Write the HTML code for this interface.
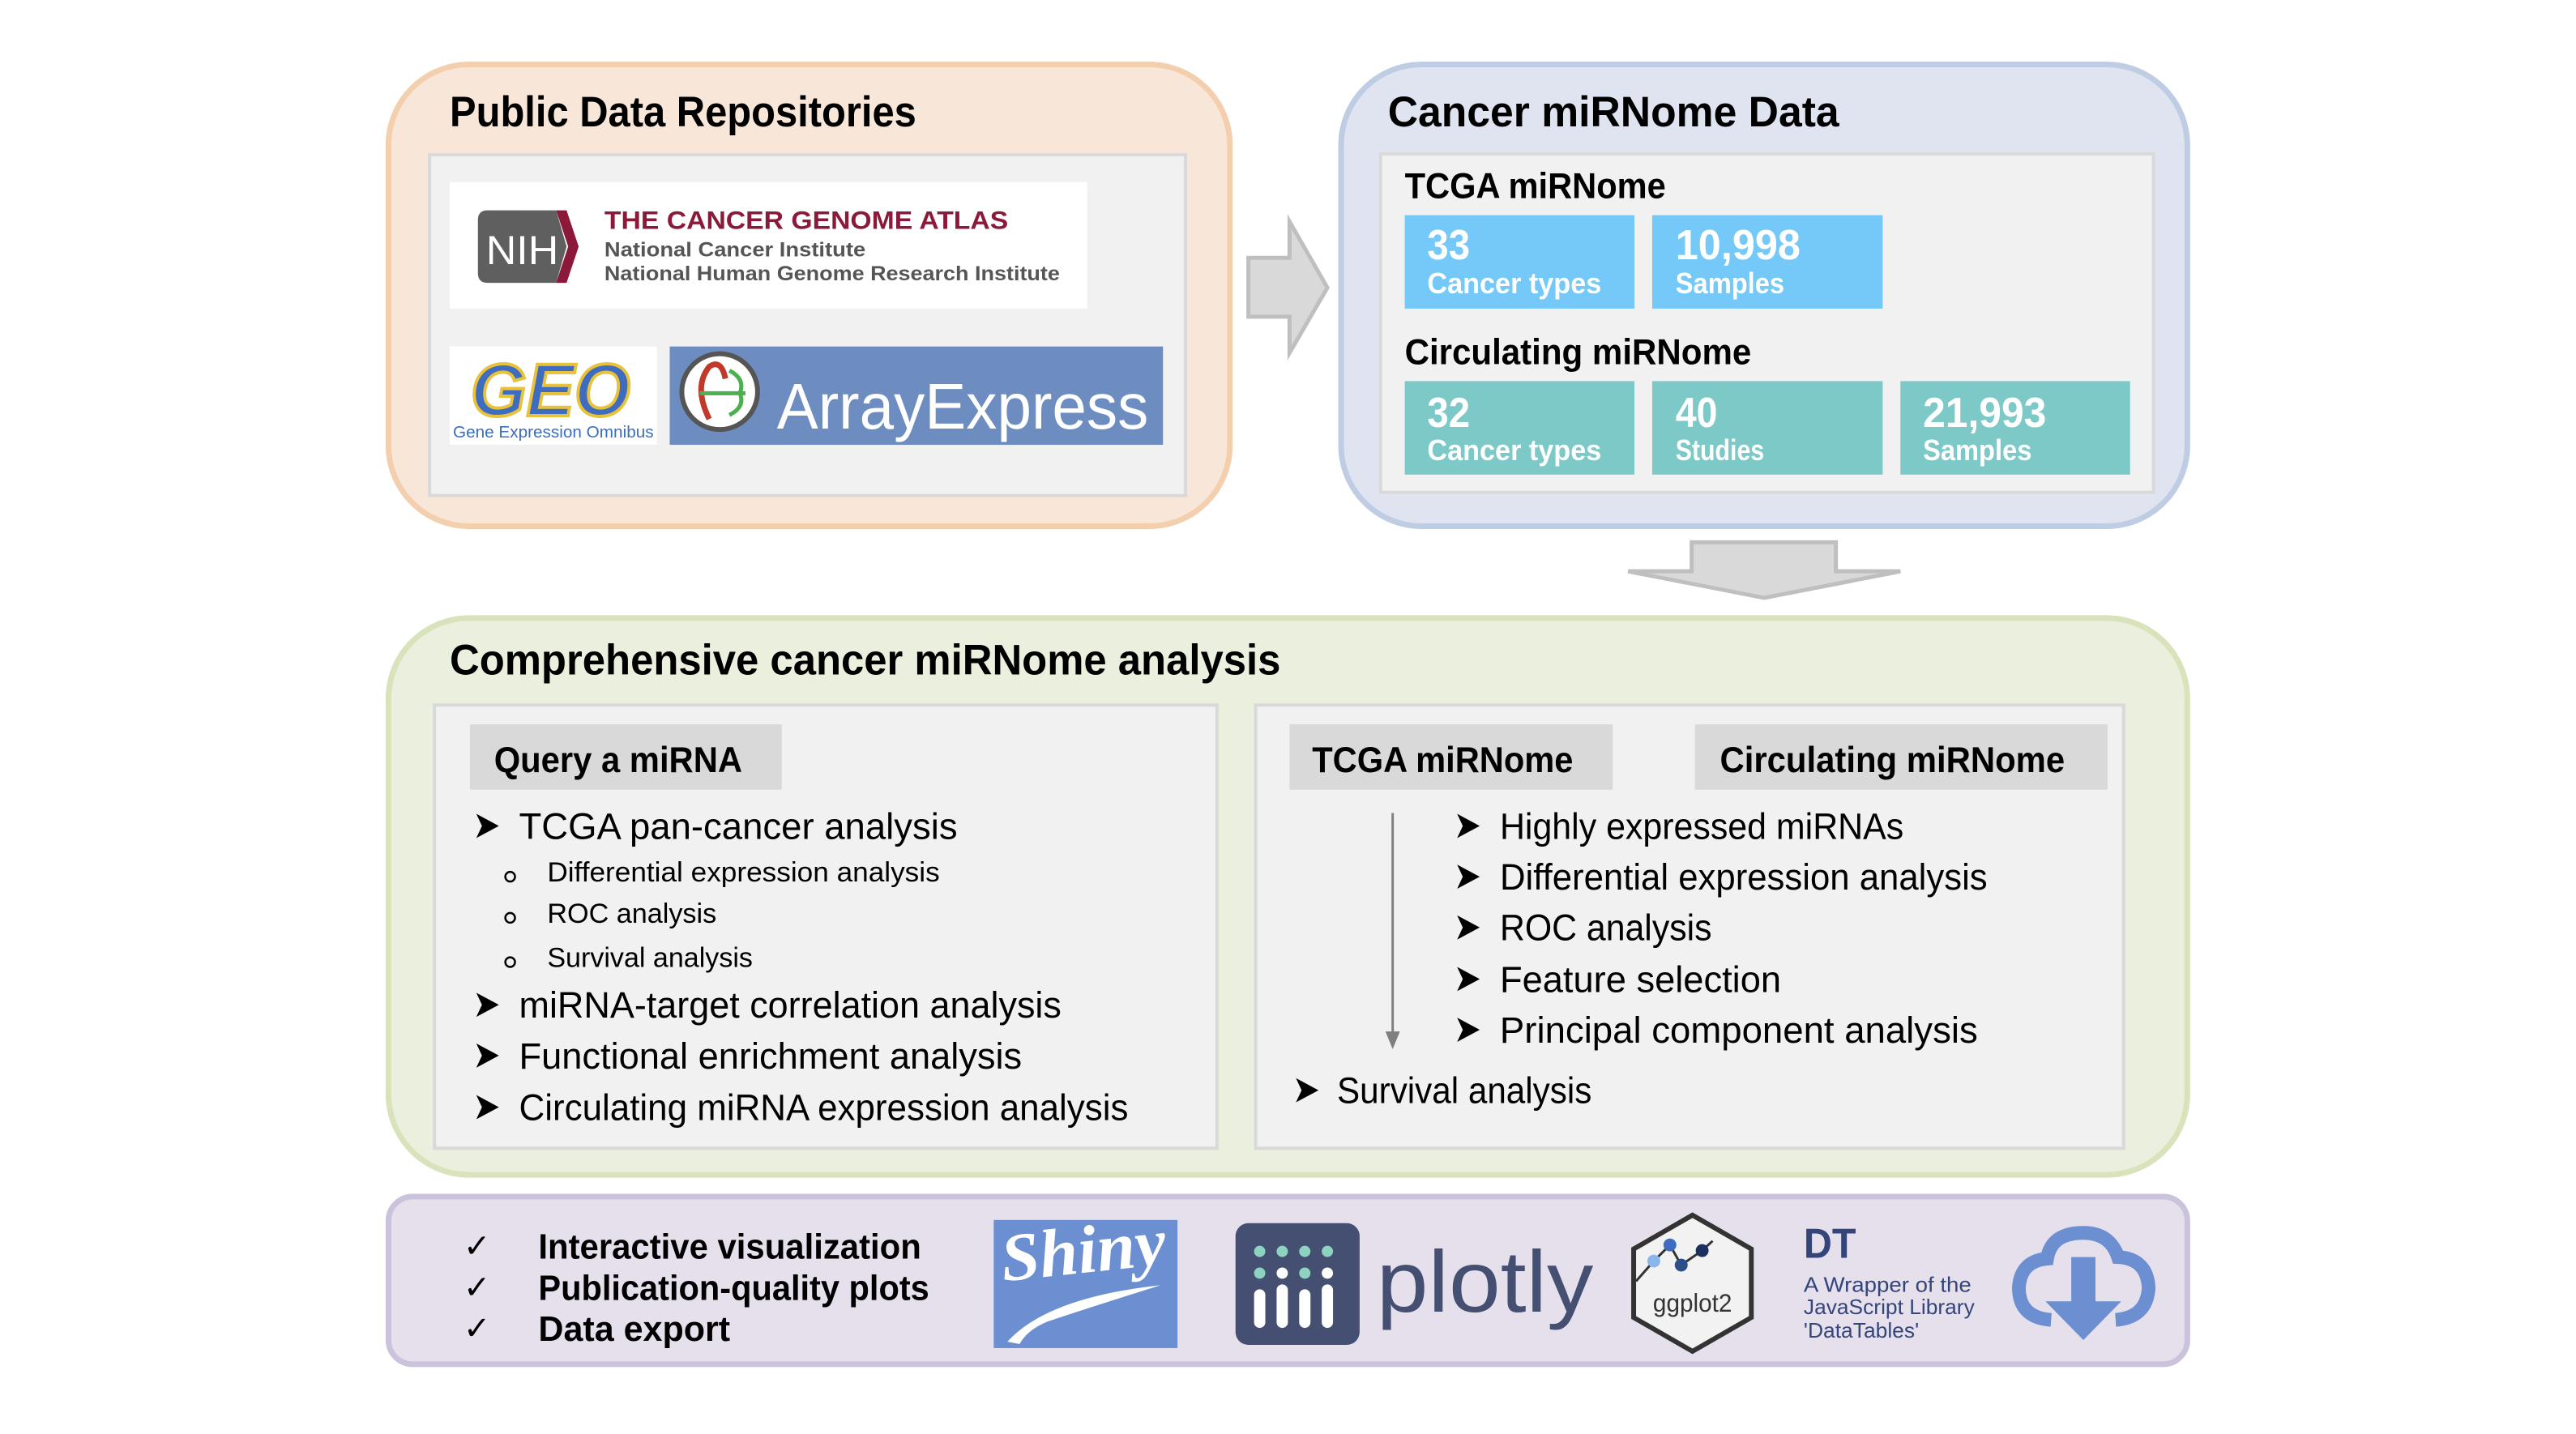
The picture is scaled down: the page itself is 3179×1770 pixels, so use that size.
<!DOCTYPE html>
<html><head><meta charset="utf-8"><style>
html,body{margin:0;padding:0;background:#fff;}
svg{display:block;}
text{font-family:"Liberation Sans",sans-serif;}
.b{font-weight:bold;}
</style></head><body>
<svg width="3179" height="1770" viewBox="0 0 3179 1770" xmlns="http://www.w3.org/2000/svg">
<defs>
<g id="arr"><path d="M0,-15 L28,0 L0,15 L7,0 Z" fill="#000"/></g>
</defs>
<g transform="scale(0.9946)">
<!-- Orange box -->
<rect x="482" y="80" width="1044" height="573" rx="100" fill="#f8e7d9" stroke="#f4cfae" stroke-width="7"/>
<text x="558" y="157" font-size="53" class="b" textLength="579" lengthAdjust="spacingAndGlyphs">Public Data Repositories</text>
<rect x="533" y="192" width="938" height="423" fill="#f1f1f1" stroke="#d9d9d9" stroke-width="4"/>
<rect x="558" y="226" width="791" height="157" fill="#fff"/>
<path d="M605,261 L690,261 L703,306 L690,351 L605,351 Q593,351 593,339 L593,273 Q593,261 605,261 Z" fill="#5f5f5f"/>
<path d="M690,261 L703,261 L718,306 L703,351 L690,351 L705,306 Z" fill="#8b1a3a"/>
<text x="603" y="328" font-size="50" fill="#fff" textLength="90" lengthAdjust="spacingAndGlyphs">NIH</text>
<text x="750" y="284" font-size="32" class="b" fill="#8b1a3a" textLength="501" lengthAdjust="spacingAndGlyphs">THE CANCER GENOME ATLAS</text>
<text x="750" y="318" font-size="25" class="b" fill="#555" textLength="324" lengthAdjust="spacingAndGlyphs">National Cancer Institute</text>
<text x="750" y="348" font-size="25" class="b" fill="#555" textLength="565" lengthAdjust="spacingAndGlyphs">National Human Genome Research Institute</text>
<rect x="558" y="430" width="257" height="122" fill="#fff"/>
<text x="584" y="516" font-size="92" class="b" font-style="italic" fill="#3d6cc0" stroke="#e8c23a" stroke-width="4" textLength="198" lengthAdjust="spacingAndGlyphs">GEO</text>
<text x="562" y="543" font-size="20" fill="#3a6fbf" textLength="249" lengthAdjust="spacingAndGlyphs">Gene Expression Omnibus</text>
<rect x="831" y="430" width="612" height="122" fill="#6d8cc0"/>
<circle cx="893" cy="486" r="47" fill="#fff" stroke="#555" stroke-width="6"/>
<path d="M880,520 Q860,480 880,455 Q895,445 900,470" fill="none" stroke="#c0392b" stroke-width="7"/>
<path d="M868,488 L925,488 M905,460 Q925,470 918,488 Q925,505 905,515" fill="none" stroke="#4caf50" stroke-width="5"/>
<text x="964" y="532" font-size="80" fill="#fff" textLength="461" lengthAdjust="spacingAndGlyphs">ArrayExpress</text>

<!-- right arrow -->
<path d="M1549,320 L1600,320 L1600,275 L1647,357 L1600,438 L1600,393 L1549,393 Z" fill="#d9d9d9" stroke="#bfbfbf" stroke-width="5"/>

<!-- Blue box -->
<rect x="1664" y="80" width="1050" height="573" rx="100" fill="#dfe4f0" stroke="#bfcde4" stroke-width="7"/>
<text x="1722" y="157" font-size="53" class="b" textLength="560" lengthAdjust="spacingAndGlyphs">Cancer miRNome Data</text>
<rect x="1713" y="191" width="959" height="420" fill="#f1f1f1" stroke="#d9d9d9" stroke-width="4"/>
<text x="1743" y="246" font-size="45" class="b" textLength="324" lengthAdjust="spacingAndGlyphs">TCGA miRNome</text>
<rect x="1743" y="267" width="285" height="116" fill="#75c9f8"/>
<rect x="2050" y="267" width="286" height="116" fill="#75c9f8"/>
<text x="1771" y="322" font-size="52" class="b" fill="#fff" textLength="53" lengthAdjust="spacingAndGlyphs">33</text>
<text x="1771" y="364" font-size="36" class="b" fill="#fff" textLength="216" lengthAdjust="spacingAndGlyphs">Cancer types</text>
<text x="2079" y="322" font-size="52" class="b" fill="#fff" textLength="155" lengthAdjust="spacingAndGlyphs">10,998</text>
<text x="2079" y="364" font-size="36" class="b" fill="#fff" textLength="135" lengthAdjust="spacingAndGlyphs">Samples</text>
<text x="1743" y="452" font-size="45" class="b" textLength="430" lengthAdjust="spacingAndGlyphs">Circulating miRNome</text>
<rect x="1743" y="473" width="285" height="116" fill="#7dc9c8"/>
<rect x="2050" y="473" width="286" height="116" fill="#7dc9c8"/>
<rect x="2358" y="473" width="285" height="116" fill="#7dc9c8"/>
<text x="1771" y="530" font-size="52" class="b" fill="#fff" textLength="53" lengthAdjust="spacingAndGlyphs">32</text>
<text x="1771" y="571" font-size="36" class="b" fill="#fff" textLength="216" lengthAdjust="spacingAndGlyphs">Cancer types</text>
<text x="2079" y="530" font-size="52" class="b" fill="#fff" textLength="52" lengthAdjust="spacingAndGlyphs">40</text>
<text x="2079" y="571" font-size="36" class="b" fill="#fff" textLength="110" lengthAdjust="spacingAndGlyphs">Studies</text>
<text x="2386" y="530" font-size="52" class="b" fill="#fff" textLength="153" lengthAdjust="spacingAndGlyphs">21,993</text>
<text x="2386" y="571" font-size="36" class="b" fill="#fff" textLength="135" lengthAdjust="spacingAndGlyphs">Samples</text>

<!-- down arrow -->
<path d="M2099,673 L2278,673 L2278,709 L2358,709 L2189,742 L2020,709 L2099,709 Z" fill="#d9d9d9" stroke="#bfbfbf" stroke-width="5"/>

<!-- Green box -->
<rect x="482" y="767" width="2232" height="691" rx="100" fill="#ebefdd" stroke="#d8e2bb" stroke-width="7"/>
<text x="558" y="837" font-size="53" class="b" textLength="1031" lengthAdjust="spacingAndGlyphs">Comprehensive cancer miRNome analysis</text>
<rect x="539" y="875" width="971" height="550" fill="#f1f1f1" stroke="#d9d9d9" stroke-width="4"/>
<rect x="583" y="899" width="387" height="81" fill="#d9d9d9"/>
<text x="613" y="958" font-size="45" class="b" textLength="308" lengthAdjust="spacingAndGlyphs">Query a miRNA</text>
<use href="#arr" x="591" y="1025"/>
<text x="644" y="1041" font-size="46" textLength="544" lengthAdjust="spacingAndGlyphs">TCGA pan-cancer analysis</text>
<circle cx="633" cy="1088" r="6" fill="none" stroke="#000" stroke-width="2.5"/>
<text x="679" y="1094" font-size="34" textLength="487" lengthAdjust="spacingAndGlyphs">Differential expression analysis</text>
<circle cx="633" cy="1139" r="6" fill="none" stroke="#000" stroke-width="2.5"/>
<text x="679" y="1145" font-size="34" textLength="210" lengthAdjust="spacingAndGlyphs">ROC analysis</text>
<circle cx="633" cy="1194" r="6" fill="none" stroke="#000" stroke-width="2.5"/>
<text x="679" y="1200" font-size="34" textLength="255" lengthAdjust="spacingAndGlyphs">Survival analysis</text>
<use href="#arr" x="591" y="1247"/>
<text x="644" y="1263" font-size="46" textLength="673" lengthAdjust="spacingAndGlyphs">miRNA-target correlation analysis</text>
<use href="#arr" x="591" y="1310"/>
<text x="644" y="1326" font-size="46" textLength="624" lengthAdjust="spacingAndGlyphs">Functional enrichment analysis</text>
<use href="#arr" x="591" y="1374"/>
<text x="644" y="1390" font-size="46" textLength="756" lengthAdjust="spacingAndGlyphs">Circulating miRNA expression analysis</text>

<rect x="1558" y="875" width="1077" height="550" fill="#f1f1f1" stroke="#d9d9d9" stroke-width="4"/>
<rect x="1600" y="899" width="401" height="81" fill="#d9d9d9"/>
<text x="1628" y="958" font-size="45" class="b" textLength="324" lengthAdjust="spacingAndGlyphs">TCGA miRNome</text>
<rect x="2103" y="899" width="512" height="81" fill="#d9d9d9"/>
<text x="2134" y="958" font-size="45" class="b" textLength="428" lengthAdjust="spacingAndGlyphs">Circulating miRNome</text>
<line x1="1728" y1="1009" x2="1728" y2="1282" stroke="#808080" stroke-width="3"/>
<path d="M1719,1280 L1737,1280 L1728,1302 Z" fill="#808080"/>
<use href="#arr" x="1808" y="1025"/>
<text x="1861" y="1041" font-size="46" textLength="501" lengthAdjust="spacingAndGlyphs">Highly expressed miRNAs</text>
<use href="#arr" x="1808" y="1088"/>
<text x="1861" y="1104" font-size="46" textLength="605" lengthAdjust="spacingAndGlyphs">Differential expression analysis</text>
<use href="#arr" x="1808" y="1151"/>
<text x="1861" y="1167" font-size="46" textLength="263" lengthAdjust="spacingAndGlyphs">ROC analysis</text>
<use href="#arr" x="1808" y="1215"/>
<text x="1861" y="1231" font-size="46" textLength="349" lengthAdjust="spacingAndGlyphs">Feature selection</text>
<use href="#arr" x="1808" y="1278"/>
<text x="1861" y="1294" font-size="46" textLength="593" lengthAdjust="spacingAndGlyphs">Principal component analysis</text>
<use href="#arr" x="1608" y="1353"/>
<text x="1659" y="1369" font-size="46" textLength="316" lengthAdjust="spacingAndGlyphs">Survival analysis</text>

<!-- Purple box -->
<rect x="482" y="1485" width="2232" height="208" rx="30" fill="#e5e0ec" stroke="#cbc2dc" stroke-width="7"/>
<text x="575" y="1560" font-size="40">✓</text>
<text x="575" y="1611" font-size="40">✓</text>
<text x="575" y="1662" font-size="40">✓</text>
<text x="668" y="1562" font-size="44" class="b" textLength="475" lengthAdjust="spacingAndGlyphs">Interactive visualization</text>
<text x="668" y="1613" font-size="44" class="b" textLength="485" lengthAdjust="spacingAndGlyphs">Publication-quality plots</text>
<text x="668" y="1664" font-size="44" class="b" textLength="238" lengthAdjust="spacingAndGlyphs">Data export</text>

<!-- Shiny -->
<rect x="1233" y="1514" width="228" height="159" fill="#6b8fd1"/>
<path d="M1250,1665 Q1300,1610 1440,1595 Q1360,1620 1300,1640 Q1275,1650 1265,1668 Z" fill="#fff"/>
<text x="1245" y="1590" font-size="84" font-style="italic" class="b" fill="#fff" style="font-family:'Liberation Serif',serif" transform="rotate(-6 1245 1590)" textLength="205" lengthAdjust="spacingAndGlyphs">Shiny</text>

<!-- plotly -->
<rect x="1533" y="1518" width="154" height="151" rx="16" fill="#444f72"/>
<g fill="#8dd3c0"><circle cx="1563" cy="1553" r="7"/><circle cx="1591" cy="1553" r="7"/><circle cx="1619" cy="1553" r="7"/><circle cx="1647" cy="1553" r="7"/><circle cx="1563" cy="1580" r="7"/><circle cx="1619" cy="1580" r="7"/></g>
<g fill="#fff"><circle cx="1591" cy="1580" r="7"/><circle cx="1647" cy="1580" r="7"/>
<rect x="1556" y="1600" width="14" height="48" rx="7"/><rect x="1584" y="1594" width="14" height="54" rx="7"/><rect x="1612" y="1600" width="14" height="48" rx="7"/><rect x="1640" y="1594" width="14" height="54" rx="7"/></g>
<text x="1708" y="1628" font-size="108" fill="#444f72" textLength="269" lengthAdjust="spacingAndGlyphs">plotly</text>

<!-- ggplot2 -->
<path d="M2100,1508 L2173,1550 L2173,1635 L2100,1677 L2027,1635 L2027,1550 Z" fill="#f2f2f2" stroke="#333" stroke-width="6"/>
<polyline points="2030,1590 2052,1565 2072,1545 2086,1570 2112,1552 2125,1540" fill="none" stroke="#333" stroke-width="3"/>
<circle cx="2052" cy="1565" r="8" fill="#8bb5ee"/><circle cx="2072" cy="1545" r="8" fill="#3d6cc0"/><circle cx="2086" cy="1570" r="8" fill="#2c4f8a"/><circle cx="2112" cy="1552" r="8" fill="#1c3060"/>
<text x="2100" y="1628" font-size="32" fill="#333" text-anchor="middle" textLength="98" lengthAdjust="spacingAndGlyphs">ggplot2</text>

<!-- DT -->
<text x="2238" y="1561" font-size="52" class="b" fill="#34457a" textLength="65" lengthAdjust="spacingAndGlyphs">DT</text>
<text x="2238" y="1603" font-size="26" fill="#34457a" textLength="208" lengthAdjust="spacingAndGlyphs">A Wrapper of the</text>
<text x="2238" y="1631" font-size="26" fill="#34457a" textLength="212" lengthAdjust="spacingAndGlyphs">JavaScript Library</text>
<text x="2238" y="1660" font-size="26" fill="#34457a" textLength="143" lengthAdjust="spacingAndGlyphs">'DataTables'</text>

<!-- cloud -->
<path d="M2545,1638 Q2505,1635 2505,1598 Q2507,1565 2540,1562 Q2545,1530 2585,1530 Q2618,1530 2628,1560 Q2664,1562 2666,1598 Q2664,1635 2625,1638" fill="none" stroke="#6b8fd1" stroke-width="17"/>
<path d="M2570,1560 L2600,1560 L2600,1615 L2632,1615 L2585,1663 L2538,1615 L2570,1615 Z" fill="#6b8fd1"/>
</g>
</svg>
</body></html>
